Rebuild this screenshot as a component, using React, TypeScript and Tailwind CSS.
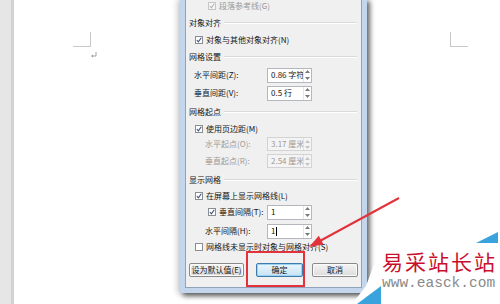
import React from "react";

const FONT = { fontFamily: '"Noto Sans CJK SC", "Noto Sans", sans-serif' };

function Check({ checked, disabled }: { checked?: boolean; disabled?: boolean }) {
  return (
    <span
      className={`w-[8px] h-[8px] border shrink-0 flex items-center justify-center ${
        disabled ? "border-[#c6c6c6] bg-[#f6f6f6]" : "border-[#8a8d91] bg-white"
      }`}
    >
      {checked && (
        <svg width="6" height="6" viewBox="0 0 6 6">
          <path
            d="M0.8 3 L2.4 4.8 L5.3 0.8"
            stroke={disabled ? "#b4b4b4" : "#3b4f7e"}
            strokeWidth="1.1"
            fill="none"
          />
        </svg>
      )}
    </span>
  );
}

function Spin({ disabled }: { disabled?: boolean }) {
  const c = disabled ? "#c4c4c4" : "#7a7a7a";
  return (
    <div className={`w-[8px] h-full flex flex-col border-l ${disabled ? "border-[#e0e0e0]" : "border-[#e6e6e6]"}`}>
      <div className="flex-1 flex items-center justify-center">
        <svg width="5" height="3" viewBox="0 0 5 3">
          <path d="M0 3 L2.5 0 L5 3 Z" fill={c} />
        </svg>
      </div>
      <div className="flex-1 flex items-center justify-center">
        <svg width="5" height="3" viewBox="0 0 5 3">
          <path d="M0 0 L2.5 3 L5 0 Z" fill={c} />
        </svg>
      </div>
    </div>
  );
}

function Field({ value, disabled, h = 15, cursor }: { value: string; disabled?: boolean; h?: number; cursor?: boolean }) {
  return (
    <div
      className={`w-[45px] flex border ${
        disabled ? "border-[#d3d3d3] bg-[#f4f4f4] text-[#9a9a9a]" : "border-[#b4b7bd] bg-white text-[#141414]"
      }`}
      style={{ height: h }}
    >
      <div className="flex-1 flex items-center pl-[3px] leading-none whitespace-nowrap overflow-hidden">
        {value}
        {cursor && <span className="w-px h-[9px] bg-black ml-px" />}
      </div>
      <Spin disabled={disabled} />
    </div>
  );
}

function Header({ text, h }: { text: string; h: number }) {
  return (
    <div className="flex items-center pl-[3px] pr-[4px] gap-[3px]" style={{ height: h }}>
      <span className="text-[#141414]">{text}</span>
      <div className="flex-1 h-[2px] border-t border-[#dadada] border-b border-b-white" />
    </div>
  );
}

function CheckRow({ text, h, indent, checked, disabled }: { text: string; h: number; indent: number; checked?: boolean; disabled?: boolean }) {
  return (
    <div className="flex items-center gap-[3px]" style={{ height: h, paddingLeft: indent }}>
      <Check checked={checked} disabled={disabled} />
      <span className={`whitespace-nowrap ${disabled ? "text-[#9a9a9a]" : "text-[#141414]"}`}>{text}</span>
    </div>
  );
}

function FieldRow({
  label,
  value,
  h,
  indent,
  disabled,
  check,
  cursor,
  fh,
}: {
  label: string;
  value: string;
  h: number;
  indent: number;
  disabled?: boolean;
  check?: boolean;
  cursor?: boolean;
  fh?: number;
}) {
  return (
    <div className="flex items-center" style={{ height: h }}>
      <div className="w-[81px] flex items-center gap-[3px]" style={{ paddingLeft: indent }}>
        {check && <Check checked />}
        <span className={`whitespace-nowrap ${disabled ? "text-[#9a9a9a]" : "text-[#141414]"}`}>{label}</span>
      </div>
      <Field value={value} disabled={disabled} cursor={cursor} h={fh} />
    </div>
  );
}

function Btn({ text, w, primary }: { text: string; w: number; primary?: boolean }) {
  return (
    <div
      className={`h-[14px] flex items-center justify-center rounded-[2px] border text-[#141414] whitespace-nowrap ${
        primary
          ? "border-[#3d7bad] bg-gradient-to-b from-[#eaf6fd] to-[#c7e3f5] shadow-[inset_0_0_0_1px_#9cd2f3]"
          : "border-[#8a8a8a] bg-gradient-to-b from-[#f4f4f4] to-[#dcdcdc] shadow-[inset_0_0_0_1px_#fbfbfb]"
      }`}
      style={{ width: w }}
    >
      {text}
    </div>
  );
}

export default function App() {
  return (
    <div className="relative w-[500px] h-[304px] overflow-hidden bg-white flex" style={FONT}>
      {/* left workspace strip */}
      <div className="w-[11px] h-full bg-[#e6e6e6] shrink-0" />
      <div className="w-[3px] h-full bg-[#d2d2d2] shrink-0" />
      <div className="flex-1 h-full bg-white" />

      {/* crop marks */}
      <div className="absolute left-[73px] top-[32px] w-[18px] h-[15px] border-r border-b border-[#c8c8c8]" />
      <div className="absolute left-[450px] top-[32px] w-[18px] h-[15px] border-l border-b border-[#c8c8c8]" />
      <svg className="absolute left-[90px] top-[51px]" width="8" height="8" viewBox="0 0 8 8">
        <path d="M6 1 V5 H2" stroke="#9a9a9a" strokeWidth="0.9" fill="none" />
        <path d="M1 5 L3 3.5 L3 6.5 Z" fill="#9a9a9a" />
      </svg>

      {/* dialog window */}
      <div className="absolute left-[180px] top-[-2px] w-[187px] px-[5px] pb-[5px] bg-[#c3d6ec] shadow-[3px_3px_5px_rgba(0,0,0,0.6),-3px_1px_6px_rgba(0,0,0,0.18)]">
        <div className="bg-[#f0f0f0] border-l border-r border-b border-[#8fa3bd] text-[8px] leading-none flex flex-col">
          <CheckRow text="段落参考线(G)" h={16} indent={22} checked disabled />
          <Header text="对象对齐" h={18} />
          <CheckRow text="对象与其他对象对齐(N)" h={16} indent={9} checked />
          <Header text="网格设置" h={18} />
          <FieldRow label="水平间距(Z):" value="0.86 字符" h={18} indent={8} />
          <FieldRow label="垂直间距(V):" value="0.5 行" h={18} indent={8} />
          <Header text="网格起点" h={19} />
          <CheckRow text="使用页边距(M)" h={15} indent={9} checked />
          <FieldRow label="水平起点(O):" value="3.17 厘米" h={16} indent={19} disabled fh={14} />
          <FieldRow label="垂直起点(R):" value="2.54 厘米" h={18} indent={19} disabled fh={14} />
          <Header text="显示网格" h={19} />
          <CheckRow text="在屏幕上显示网格线(L)" h={13} indent={9} checked />
          <FieldRow label="垂直间隔(T):" value="1" h={20} indent={22} check />
          <FieldRow label="水平间隔(H):" value="1" h={18} indent={19} cursor />
          <CheckRow text="网格线未显示时对象与网格对齐(S)" h={13} indent={9} />
          <div className="h-[34px] flex items-center pl-[3px] gap-[12px]">
            <Btn text="设为默认值(E)" w={55} />
            <div className="flex gap-[9px]">
              <Btn text="确定" w={47} primary />
              <Btn text="取消" w={46} />
            </div>
          </div>
        </div>
      </div>

      {/* red highlight box */}
      <div className="absolute left-[246px] top-[251px] w-[59px] h-[36px] border-2 border-[#e2323b]" />

      {/* watermark shapes */}
      <svg className="absolute left-0 top-0" width="500" height="304" viewBox="0 0 500 304">
        <polygon points="366,286 375,262 381,262 381,288 358,304 352,304" fill="#ffffff" />
        <polygon points="357,304 381,286 381,304" fill="#3aa3dd" />
        <polygon points="476,243 498,232 498,243" fill="#3aa3dd" />
        {/* red arrow */}
        <line x1="399" y1="198" x2="318" y2="242" stroke="#e2323b" strokeWidth="2" />
        <polygon points="309,247 323.6,244.6 318.8,235.8" fill="#e2323b" />
      </svg>

      <div className="absolute left-[382px] top-[249px] flex flex-col items-start">
        <div
          className="text-[21px] leading-[24px] tracking-[2px] text-[#c8102e]"
          style={{ fontFamily: '"Noto Sans CJK SC", sans-serif' }}
        >
          易采站长站
        </div>
        <div
          className="text-[14.5px] leading-[16px] text-[#8a8a8a] mt-[2px]"
          style={{ fontFamily: '"Liberation Mono", monospace' }}
        >
          www.easck.com
        </div>
      </div>
    </div>
  );
}
